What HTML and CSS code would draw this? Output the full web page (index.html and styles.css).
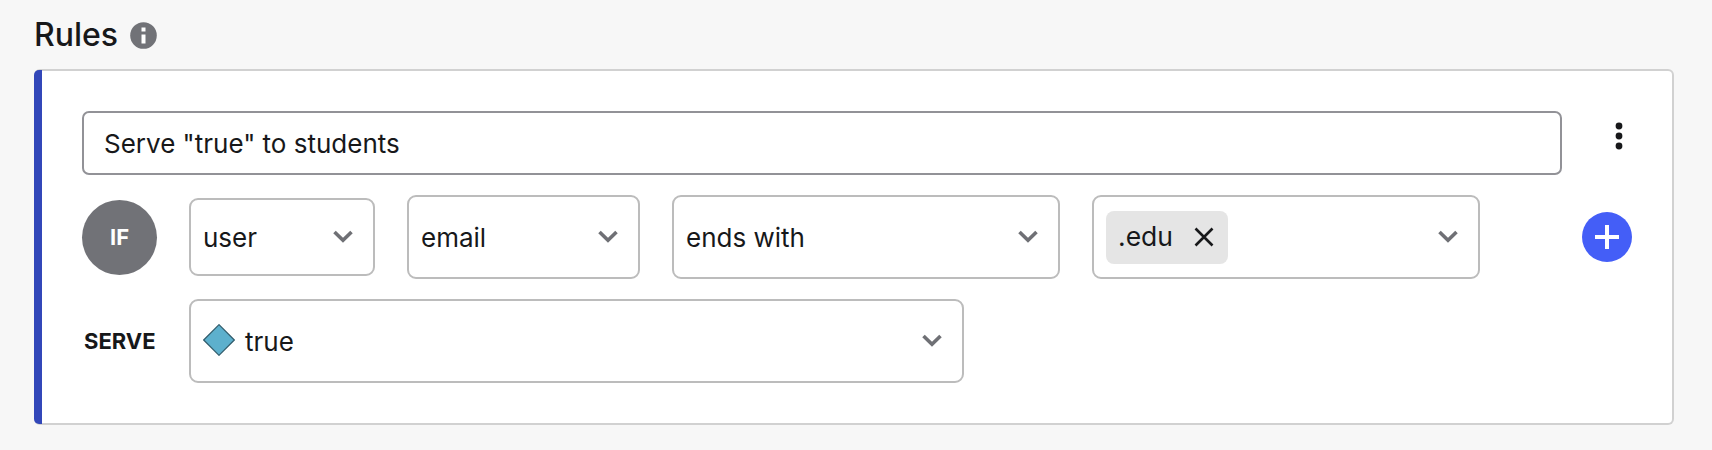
FILE: index.html
```html
<!DOCTYPE html>
<html lang="en">
<head>
<meta charset="utf-8">
<title>Rules</title>
<link rel="stylesheet" href="styles.css">
</head>
<body>
<svg class="symbols" aria-hidden="true">
  <symbol id="chevron" viewBox="0 0 20 14"><path d="M1.5 2 10 10.3 18.500 2" fill="none" stroke="#6f7075" stroke-width="3.600"/></symbol>
</svg>
<main class="page">
  <header class="heading">
    <h1 class="title">Rules</h1>
    <svg class="info" viewBox="0 0 27 27"><circle cx="13.500" cy="13.500" r="13.300" fill="#717277"/><path d="M11.500 5.500h4v4h-4zM11.500 12.500h4v9h-4z" fill="#fff"/></svg>
  </header>
  <section class="card">
    <div class="row name-row">
      <div class="name"><span>Serve "true" to students</span></div>
      <svg class="more" viewBox="0 0 8 30"><g fill="#17181a"><circle cx="4" cy="5" r="3.400"/><circle cx="4" cy="15" r="3.400"/><circle cx="4" cy="25" r="3.400"/></g></svg>
    </div>
    <div class="row">
      <div class="badge"><span>IF</span></div>
      <div class="select context"><span class="label">user</span><svg class="chevron"><use href="#chevron"/></svg></div>
      <div class="select attribute"><span class="label">email</span><svg class="chevron"><use href="#chevron"/></svg></div>
      <div class="select operator"><span class="label">ends with</span><svg class="chevron"><use href="#chevron"/></svg></div>
      <div class="select values">
        <div class="chip"><span class="chip-label">.edu</span><svg class="remove" viewBox="0 0 20 20"><path d="M1.500 1.500l17 17M18.500 1.500l-17 17" stroke="#17181a" stroke-width="2.600"/></svg></div>
        <svg class="chevron"><use href="#chevron"/></svg>
      </div>
      <div class="add"><svg viewBox="0 0 50 50"><path d="M13 25h24M25 13v24" stroke="#fff" stroke-width="4"/></svg></div>
    </div>
    <div class="row">
      <div class="serve">SERVE</div>
      <div class="select variation">
        <svg class="diamond" viewBox="0 0 32 32"><path d="M16 .7 31.300 16 16 31.300.7 16z" fill="#5db0cd" stroke="#2f5b6b" stroke-width="1.200"/></svg>
        <span class="label">true</span><svg class="chevron"><use href="#chevron"/></svg>
      </div>
    </div>
  </section>
</main>
</body>
</html>
```
FILE: styles.css
```css
* { box-sizing: border-box; }
body { margin: 0; background: #f7f7f7; color: #17181a; font-family: Inter, "Liberation Sans", sans-serif; font-size: 26px; }
svg { display: block; flex: none; }
.symbols { display: none; }
.page { height: 450px; padding: 0 38px 0 34px; overflow: hidden; }
.heading { display: flex; align-items: center; gap: 12px; height: 69px; padding-top: 1px; }
.title { margin: 0; font-size: 32px; font-weight: 500; line-height: 40px; }
.info { width: 27px; height: 27px; }
.card { display: flex; flex-direction: column; gap: 20px; height: 356px; padding: 40px 40px 40px 48px; background: #fff; border: 2px solid #d1d1d1; border-left: 0; border-radius: 6px; position: relative; }
.card::before { content: ""; position: absolute; left: 0; top: -1px; bottom: -1px; width: 8px; background: #3247b9; border-radius: 5px 0 0 5px; }
.row { display: flex; align-items: center; }
.name-row { align-items: flex-start; }
.name { display: flex; align-items: center; width: 1480px; height: 64px; padding-left: 20px; border: 2px solid #929297; border-radius: 7px; }
.more { width: 8px; height: 30px; margin: 10px 0 0 53px; }
.badge { display: flex; align-items: center; justify-content: center; width: 75px; height: 75px; margin-right: 32px; border-radius: 50%; background: #717277; color: #fff; font-size: 22px; font-weight: 700; }
.select { display: flex; align-items: center; height: 84px; padding: 0 20px 0 12px; border: 2px solid #bcbcbc; border-radius: 9px; margin-right: 32px; }
.context { width: 186px; height: 78px; }
.attribute { width: 233px; }
.operator { width: 388px; }
.values { width: 388px; }
.variation { width: 775px; }
.chevron { width: 20px; height: 14px; margin-left: auto; }
.chip { display: flex; align-items: center; gap: 21px; width: 122px; height: 53px; padding: 0 0 1px 12px; border-radius: 8px; background: #e5e5e5; }
.chip-label { font-size: 26.5px; padding-bottom: 1px; }
.remove { width: 20px; height: 20px; }
.add { width: 50px; height: 50px; margin-left: 70px; border-radius: 50%; background: #445ef7; }
.serve { width: 107px; padding-left: 2px; font-size: 22px; font-weight: 700; }
.diamond { width: 32px; height: 32px; margin: 0 10px 2px 0; }
```
